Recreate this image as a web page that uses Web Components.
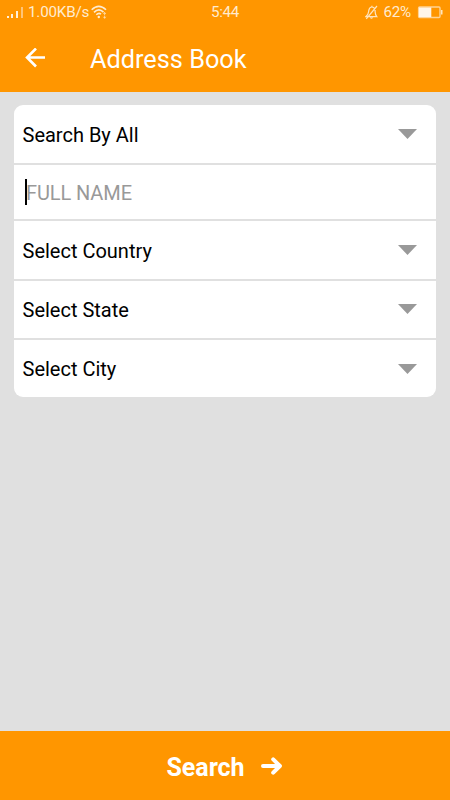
<!DOCTYPE html>
<html lang="en">
<head>
<meta charset="utf-8">
<title>Address Book</title>
<style>
html,body{margin:0;height:100%}
body{font-family:Roboto,sans-serif;background:#e0e0e0;overflow:hidden}
</style>
</head>
<body>
<address-app></address-app>
<script>
const define = (name, html) => customElements.define(name, class extends HTMLElement {
  constructor() {
    super();
    const t = document.createElement('template');
    t.innerHTML = html;
    this.attachShadow({mode: 'open'}).append(t.content.cloneNode(true));
  }
});

define('status-bar', `
<style>
:host{display:grid;grid-template-columns:1fr auto 1fr;align-items:center;height:24px;color:#ffebcf;font-size:15.2px;line-height:24px;white-space:nowrap}
div{display:flex;align-items:center}
.left{padding-left:6px}
.right{justify-content:flex-end;padding-right:7px}
svg{display:block;flex:none}
.time{letter-spacing:-.3px}
.speed{margin-left:5px;letter-spacing:-.2px}
.wifi{margin-left:2px}
.pct{margin-left:6px;margin-right:6px;letter-spacing:-.25px}
</style>
<div class="left">
  <svg width="17" height="14" viewBox="0 0 17 14"><path d="M1 11h2v2H1zM5 9h2v4H5zM10 6h2v7h-2z" fill="#fff0da"/><path d="M15 2h2v11h-2z" fill="#ffc477"/></svg>
  <span class="speed">1.00KB/s</span>
  <svg class="wifi" width="16" height="14" viewBox="0 0 16 14" fill="none" stroke="#ffebcf" stroke-width="1.6"><path d="M.7 4.8Q7.8-2.2 15 4.8M3 7.4Q7.8 2.5 12.5 7.1M5.3 9.8Q7.8 7.3 10 9.2"/><circle cx="7.8" cy="12" r="1.2" fill="#ffebcf" stroke="none"/><path d="M13.6 7.4v3M12.4 9l1.2-1.5L14.8 9M13.6 11v2.3M12.4 11.8l1.2 1.5 1.2-1.5" stroke-width=".7"/></svg>
</div>
<span class="time">5:44</span>
<div class="right">
  <svg width="13" height="15" viewBox="0 0 13 15" fill="none" stroke="#ffe5c0" stroke-width="1.2"><path d="M1 11.6h10.7C9.9 9.7 10.4 7.5 10 5.2 9.7 2.8 8.5 2 6.9 2S4.2 3 3.8 5.4C3.4 7.9 3.6 9.6 1 11.6zM5.5 12.5q.9 1.5 2 0M12 1L1.3 13.8M6.9.7V2"/></svg>
  <span class="pct">62%</span>
  <svg width="26" height="13" viewBox="0 0 26 13"><rect x="1.6" y="1" width="21.4" height="10.5" rx="1" fill="none" stroke="#ffd394" stroke-width="1.4"/><path d="M2 1.5h12.3v9.6H2z" fill="#fff5e8"/><path d="M24 4h1.5v4.5H24z" fill="#ffe5c0"/></svg>
</div>`);

define('app-bar', `
<style>
:host{display:flex;align-items:center;height:68.4px;color:#fff;font-size:25.3px;line-height:30px}
svg{flex:none;margin-left:25px;margin-right:45px}
span{padding-top:3px}
</style>
<svg width="20" height="20" viewBox="0 0 20 20" fill="none" stroke="#fff" stroke-width="2.6"><path d="M20 9.5H2M11 .5L2 9.5l9 9"/></svg>
<span><slot></slot></span>`);

define('select-field', `
<style>
:host{display:flex;align-items:center;justify-content:space-between;box-sizing:border-box;background:#fff;color:#000;padding:0 19px 0 8.5px;font-size:20px;line-height:24px}
:host([low]) span{padding-top:2px}
</style>
<span><slot></slot></span>
<svg width="19" height="10" viewBox="0 0 19 10"><path d="M0 0h19L9.5 10z" fill="#999"/></svg>`);

define('text-field', `
<style>
:host{display:flex;align-items:center;box-sizing:border-box;background:#fff;color:#999;padding-left:11px;font-size:20px;line-height:24px;letter-spacing:-.1px}
i{width:2px;height:26px;background:#000;margin-right:-1px;margin-top:1px}
span{padding-top:2px}
</style>
<i></i><span><slot></slot></span>`);

define('form-card', `
<style>
:host{display:grid;grid-template-rows:57.5px 54px 58px 57px 57.5px;gap:2px;margin:13.1px 14px 0;border-radius:9px;overflow:hidden;background:#e0e0e0}
</style>
<slot></slot>`);

define('search-button', `
<style>
:host{display:flex;align-items:center;justify-content:center;height:69px;box-sizing:border-box;padding-top:4px;padding-right:2px;gap:16px;background:#ff9600;color:#fff;font-weight:700;font-size:25px;line-height:30px}
svg{margin-top:-4px}
</style>
<slot></slot>
<svg width="21" height="18" viewBox="0 0 21 18" fill="none" stroke="#fff" stroke-width="4" stroke-linecap="round" stroke-linejoin="round"><path d="M2 9h16.2M12.2 2.3L18.9 9l-6.7 6.7"/></svg>`);

define('address-app', `
<style>
:host{display:flex;flex-direction:column;width:450px;height:800px;background:#e0e0e0}
header{background:#ff9600}
main{flex:1}
</style>
<header><status-bar></status-bar><app-bar>Address Book</app-bar></header>
<main>
<form-card>
<select-field low>Search By All</select-field>
<text-field>FULL NAME</text-field>
<select-field low>Select Country</select-field>
<select-field low>Select State</select-field>
<select-field>Select City</select-field>
</form-card>
</main>
<search-button>Search</search-button>`);
</script>
</body>
</html>
